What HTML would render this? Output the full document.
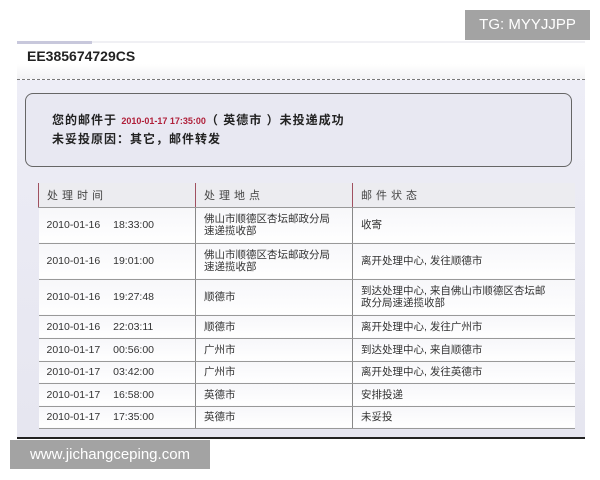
<!DOCTYPE html>
<html><head><meta charset="utf-8"><style>
*{margin:0;padding:0;box-sizing:border-box}
body{width:600px;height:480px;background:#fff;position:relative;overflow:hidden;font-family:"Liberation Sans","Noto Sans CJK SC",sans-serif;color:#333}
.a{position:absolute}
.tg{left:465px;top:10px;width:125px;height:30px;background:#a3a3a3;color:#fff;font-size:15px;line-height:30px;text-align:center}
.www{left:10px;top:440px;width:200px;height:29px;background:#a3a3a3;color:#fff;font-size:15px;line-height:29px;text-align:center}
.content{left:17px;top:80px;width:568px;height:358px;background:linear-gradient(#ededf6,#e6e6f0)}
.box{left:25px;top:93px;width:547px;height:74px;border:1px solid #666;border-radius:8px;background:#e8e8f2}
.t1{left:52px;top:111px;font-size:12px;font-weight:bold;color:#222;letter-spacing:1px;white-space:nowrap}
.t2{left:52px;top:130px;font-size:12px;font-weight:bold;color:#222;letter-spacing:1px;white-space:nowrap}
.red{color:#b0203a;font-size:9px;letter-spacing:0;font-weight:bold}
table{position:absolute;left:38px;top:183px;width:537px;border-collapse:collapse;font-size:10.5px;color:#333}
td{border-bottom:1px solid #999;padding:0 8px;vertical-align:middle;line-height:12px;background:linear-gradient(#f7f7fa,#fff);white-space:nowrap}
td+td{border-left:1px solid #888}
td:first-child{word-spacing:10px;padding-left:8px}
th{text-align:left;font-weight:normal;font-size:11px;letter-spacing:4px;padding:0 8px;background:#ececf0;border-left:1px solid #a05060;border-bottom:1px solid #999;color:#444;height:24px}
</style></head><body>
<div class="a tg">TG: MYYJJPP</div>
<div class="a" style="left:17px;top:41px;width:75px;height:3px;background:#c8c8dc"></div>
<div class="a" style="left:92px;top:41px;width:493px;height:2px;background:#f0f0f4"></div>
<div class="a" style="left:27px;top:48px;font-size:14px;font-weight:bold;color:#222">EE385674729CS</div>
<div class="a" style="left:17px;top:64px;width:568px;height:15px;background:linear-gradient(#fff,#f2f2f4)"></div>
<div class="a content"></div>
<div class="a" style="left:17px;top:79px;width:568px;border-top:1px dashed #777"></div>
<div class="a box"></div>
<div class="a t1">您的邮件于 <span class="red">2010-01-17 17:35:00</span>（ 英德市 ）未投递成功</div>
<div class="a t2">未妥投原因：其它，邮件转发</div>
<table>
<tr><th style="width:157px">处理时间</th><th style="width:157px">处理地点</th><th>邮件状态</th></tr>
<tr style="height:36px"><td>2010-01-16 18:33:00</td><td>佛山市顺德区杏坛邮政分局<br>速递揽收部</td><td>收寄</td></tr>
<tr style="height:36px"><td>2010-01-16 19:01:00</td><td>佛山市顺德区杏坛邮政分局<br>速递揽收部</td><td>离开处理中心, 发往顺德市</td></tr>
<tr style="height:36px"><td>2010-01-16 19:27:48</td><td>顺德市</td><td>到达处理中心, 来自佛山市顺德区杏坛邮<br>政分局速递揽收部</td></tr>
<tr style="height:23px"><td>2010-01-16 22:03:11</td><td>顺德市</td><td>离开处理中心, 发往广州市</td></tr>
<tr style="height:23px"><td>2010-01-17 00:56:00</td><td>广州市</td><td>到达处理中心, 来自顺德市</td></tr>
<tr style="height:22px"><td>2010-01-17 03:42:00</td><td>广州市</td><td>离开处理中心, 发往英德市</td></tr>
<tr style="height:23px"><td>2010-01-17 16:58:00</td><td>英德市</td><td>安排投递</td></tr>
<tr style="height:22px"><td>2010-01-17 17:35:00</td><td>英德市</td><td>未妥投</td></tr>
</table>
<div class="a" style="left:17px;top:437px;width:568px;height:2px;background:#222"></div>
<div class="a www">www.jichangceping.com</div>
</body></html>
